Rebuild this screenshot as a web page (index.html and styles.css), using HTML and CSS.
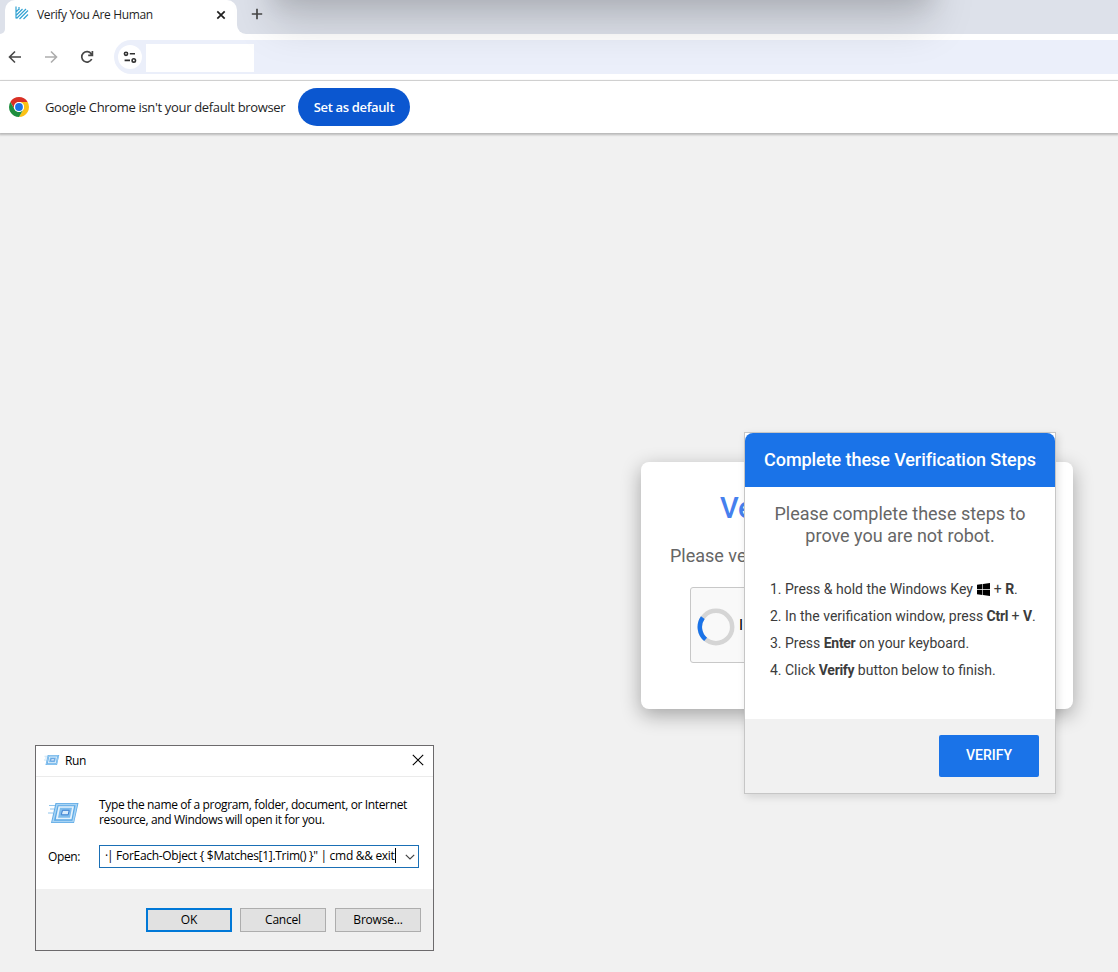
FILE: index.html
```html
<!DOCTYPE html>
<html lang="en">
<head>
    <meta charset="UTF-8">
    <meta name="viewport" content="width=device-width, initial-scale=1.0">
    <title>Verify You Are Human</title>
    <link rel="stylesheet" href="styles.css">
</head>
<body>
    <div class="tab-strip">
        <div class="strip-left"></div>
        <div class="tab-wrap">
            <div class="tab">
                <svg class="favicon" width="14" height="16" viewBox="0 0 14 16" fill="none" stroke="#35a3d3" stroke-width="1.2">
                    <path d="M1 1.500v12M1.500 6.500l3-3M1.500 10l6-6M1.500 13.500L11 4M4.500 14l8.500-8.500M8.500 14l4.500-4.500M4 2v3"/>
                </svg>
                <span class="tab-title">Verify You Are Human</span>
                <svg class="tab-close" width="10" height="10" viewBox="0 0 10 10" stroke="#1f1f1f" stroke-width="1.7">
                    <path d="M1.300 1.300l7.400 7.400M8.700 1.300l-7.400 7.400"/>
                </svg>
            </div>
        </div>
        <div class="strip-right">
            <svg class="new-tab" width="12" height="12" viewBox="0 0 12 12" stroke="#474747" stroke-width="1.700">
                <path d="M6 .8v10.400M.8 6h10.400"/>
            </svg>
        </div>
    </div>

    <div class="toolbar">
        <svg class="nav-icon" width="16" height="16" viewBox="0 0 16 16" fill="none" stroke="#474747" stroke-width="1.600">
            <path d="M14 8H3M8 2.500L2.500 8 8 13.500"/>
        </svg>
        <svg class="nav-icon" width="16" height="16" viewBox="0 0 16 16" fill="none" stroke="#adadad" stroke-width="1.600">
            <path d="M2 8h11M8 2.500L13.500 8 8 13.500"/>
        </svg>
        <svg class="nav-icon" width="16" height="16" viewBox="0 0 16 16" fill="none" stroke="#474747" stroke-width="1.700">
            <path d="M12.700 10A5.200 5.200 0 1 1 12.300 5L13.300 6.200M13.400 2v4.300H9.200"/>
        </svg>
        <div class="address-bar">
            <div class="site-info">
                <svg width="14" height="14" viewBox="0 0 14 14" fill="none" stroke="#303030" stroke-width="1.600">
                    <circle cx="3" cy="3.800" r="1.600"/>
                    <path d="M6.800 3.800H12M1.600 10.400H7"/>
                    <circle cx="10.800" cy="10.400" r="1.700"/>
                </svg>
            </div>
            <div class="url"></div>
        </div>
    </div>

    <div class="infobar">
        <svg class="chrome-logo" width="20" height="20" viewBox="0 0 20 20">
            <path fill="#d93025" d="M1.340 5A10 10 0 0 1 18.660 5L10 5A5 5 0 0 0 5.670 12.500Z"/>
            <path fill="#fbc116" d="M18.660 5A10 10 0 0 1 10 20L14.330 12.500A5 5 0 0 0 10 5Z"/>
            <path fill="#1e8e3e" d="M1.340 5A10 10 0 0 0 10 20L14.330 12.500A5 5 0 0 1 5.670 12.500Z"/>
            <circle cx="10" cy="10" r="5" fill="#fff"/>
            <circle cx="10" cy="10" r="3.900" fill="#1a73e8"/>
        </svg>
        <span class="infobar-text">Google Chrome isn't your default browser</span>
        <button class="default-btn">Set as default</button>
    </div>

    <div class="window-shadow"></div>

    <div class="card">
        <h1>Ve</h1>
        <p>Please ve</p>
        <div class="checkbox-box">
            <div class="spinner">
                <svg width="38" height="38" viewBox="0 0 38 38" fill="none" stroke-width="4.500">
                    <circle cx="19" cy="19" r="16.200" stroke="#d5d5d5"/>
                    <path stroke="#1a73e8" d="M5.800 9.600A16.200 16.200 0 0 0 8.600 31.400"/>
                </svg>
            </div>
            <span>I</span>
        </div>
    </div>

    <div class="modal">
        <div class="modal-header">Complete these Verification Steps</div>
        <div class="modal-body">
            <p>Please complete these steps to<br>prove you are not robot.</p>
            <ol>
                <li>Press &amp; hold the Windows Key
                    <svg class="win-logo" width="13" height="13" viewBox="0 0 13 13" fill="#000">
                        <path d="M0 1.800L5.400 1v5.100H0zM6 .9L13 0v6.100H6zM0 6.800h5.400V12L0 11.200zM6 6.800h7V13l-7-.9z"/>
                    </svg>
                    + <b>R</b>.</li>
                <li>In the verification window, press <b>Ctrl</b> + <b>V</b>.</li>
                <li>Press <b>Enter</b> on your keyboard.</li>
                <li>Click <b>Verify</b> button below to finish.</li>
            </ol>
        </div>
        <div class="modal-footer">
            <button class="verify-btn">VERIFY</button>
        </div>
    </div>

    <div class="run">
        <div class="run-title">
            <svg width="16" height="12" viewBox="0 0 32 22">
                <use href="#run-icon"/>
            </svg>
            <span>Run</span>
            <svg class="run-close" width="12" height="12" viewBox="0 0 12 12" stroke="#000" stroke-width="1.100">
                <path d="M.8.8l10.400 10.400M11.200.8L.8 11.200"/>
            </svg>
        </div>
        <div class="run-body">
            <div class="run-info">
                <svg width="32" height="22" viewBox="0 0 32 22">
                    <g id="run-icon">
                        <path fill="#5ca9e6" d="M7.500 1h23L26 21H3z"/>
                        <path fill="none" stroke="#a8d4f4" stroke-width="1.500" d="M9 2.500h19.500L25 19.500H5z"/>
                        <path fill="#e4f2fc" d="M10.500 4.200h15.500L23.500 17.300H7.800z"/>
                        <path fill="#7dbbec" d="M12 5.800h12L22 15.700H10z"/>
                        <path fill="#d6eafb" stroke="#3b7fd0" d="M14.500 8.300h6.700l-1 4.500h-6.900z"/>
                        <path stroke="#8fc4ec" stroke-width="1" d="M1 3.500h6M2 7h4M0 11h5"/>
                    </g>
                </svg>
                <p>Type the name of a program, folder, document, or Internet<br>resource, and Windows will open it for you.</p>
            </div>
            <div class="run-open">
                <label>Open:</label>
                <div class="combo">
                    <span class="combo-text"><i>·</i>| ForEach-Object { $Matches[1].Trim() }" | cmd &amp;&amp; exit</span>
                    <span class="caret"></span>
                    <svg width="10" height="6" viewBox="0 0 10 6" fill="none" stroke="#444" stroke-width="1.200">
                        <path d="M.8.8L5 5 9.200.8"/>
                    </svg>
                </div>
            </div>
        </div>
        <div class="run-footer">
            <button class="run-btn primary">OK</button>
            <button class="run-btn">Cancel</button>
            <button class="run-btn">Browse...</button>
        </div>
    </div>
</body>
</html>
```
FILE: styles.css
```css
* {
    box-sizing: border-box;
}
body {
    margin: 0;
    height: 972px;
    position: relative;
    overflow: hidden;
    background-color: #f1f1f1;
    font-family: "Open Sans", "Noto Sans", sans-serif;
    color: #1f1f1f;
}
svg {
    display: block;
    flex-shrink: 0;
}
button {
    font-family: inherit;
    padding: 0;
    border: none;
}

/* browser */
.tab-strip {
    height: 34px;
    display: flex;
    background-color: #fff;
}
.strip-left {
    width: 5px;
    background-color: #dde1ea;
    border-radius: 0 0 5px 0;
}
.strip-right {
    flex: 1;
    background-color: #dde1ea;
    border-radius: 0 0 0 9px;
}
.tab-wrap {
    background-color: #dde1ea;
    background-size: 100% 12px;
    background-repeat: no-repeat;
}
.tab {
    width: 232px;
    height: 34px;
    padding: 0 11px 5px 10px;
    display: flex;
    align-items: center;
    background-color: #fff;
    border-radius: 10px 10px 0 0;
}
.favicon {
    margin-top: -3px;
}
.tab-title {
    margin-left: 8px;
    font-size: 12px;
    letter-spacing: -0.37px;
    white-space: nowrap;
}
.tab-close {
    margin-left: auto;
}
.new-tab {
    margin: 8px 0 0 14px;
}
.toolbar {
    height: 47px;
    padding: 6px 0 6px 7px;
    display: flex;
    background-color: #fff;
    border-bottom: 1px solid #dcdcdc;
}
.nav-icon {
    margin: 9px 20px 0 0;
}
.address-bar {
    flex: 1;
    height: 34px;
    margin-left: -1px;
    padding-left: 4px;
    display: flex;
    align-items: center;
    background-color: #ebeffa;
    border-radius: 17px 0 0 17px;
}
.site-info {
    width: 24px;
    height: 24px;
    display: flex;
    align-items: center;
    justify-content: center;
    background-color: #fff;
    border-radius: 50%;
}
.url {
    width: 108px;
    height: 28px;
    margin: 2px 0 0 4px;
    background-color: #fff;
}
.infobar {
    height: 52px;
    padding-left: 9px;
    display: flex;
    align-items: center;
    background-color: #fff;
    box-shadow: 0 1px 2px 1px #b9b9b9;
}
.infobar-text {
    margin-left: 16px;
    width: 253px;
    font-size: 13px;
    letter-spacing: -0.33px;
    white-space: nowrap;
}
.default-btn {
    width: 112px;
    height: 38px;
    border-radius: 19px;
    background-color: #0b57d0;
    color: #fff;
    font-size: 13px;
    font-weight: 600;
    letter-spacing: -0.35px;
}
/* shadow cast by a window above the screen edge */
.window-shadow {
    position: absolute;
    left: 272px;
    top: -100px;
    width: 660px;
    height: 100px;
    box-shadow: 0 4px 22px rgba(0, 0, 0, 0.1), 0 24px 44px rgba(0, 0, 0, 0.15);
}

/* verification page */
.card {
    position: absolute;
    left: 641px;
    top: 462px;
    width: 432px;
    height: 247px;
    padding: 29px 0 0 29px;
    background-color: #fff;
    border-radius: 8px;
    box-shadow: 0 6px 20px rgba(0, 0, 0, 0.32);
    font-family: Roboto, sans-serif;
}
.card h1 {
    margin: 0 0 0 50px;
    font-size: 29px;
    line-height: 34px;
    font-weight: 500;
    color: #4580ee;
}
.card p {
    margin: 20px 0 0;
    font-size: 18px;
    line-height: 22px;
    color: #666;
}
.checkbox-box {
    width: 300px;
    height: 76px;
    margin: 20px 0 0 20px;
    padding-left: 6px;
    display: flex;
    align-items: center;
    background-color: #f9f9f9;
    border: 1px solid #c8c8c8;
    border-radius: 3px;
    font-size: 15px;
    color: #000;
}
.spinner {
    width: 42px;
    padding-top: 3px;
}
.modal {
    position: absolute;
    left: 744px;
    top: 432px;
    width: 312px;
    height: 362px;
    background-color: #fff;
    border: 1px solid #c6c6c6;
    box-shadow: 2px 3px 8px rgba(0, 0, 0, 0.12);
    font-family: Roboto, sans-serif;
}
.modal-header {
    height: 54px;
    border-radius: 8px 8px 0 0;
    background-color: #1a73e8;
    color: #fff;
    font-size: 18px;
    font-weight: 500;
    line-height: 54px;
    letter-spacing: -0.07px;
    text-align: center;
    white-space: nowrap;
}
.modal-body {
    height: 232px;
    padding-top: 16px;
}
.modal-body p {
    margin: 0;
    font-size: 18px;
    line-height: 22px;
    text-align: center;
    color: #666;
}
.modal-body ol {
    margin: 29px 0 0;
    padding-left: 40px;
    font-size: 14px;
    line-height: 27px;
    color: #3c3c3c;
    white-space: nowrap;
}
.modal-body b {
    font-weight: 700;
    letter-spacing: -0.3px;
}
.win-logo {
    display: inline-block;
    vertical-align: -2px;
    margin-left: 1px;
}
.modal-footer {
    height: 74px;
    padding: 16px;
    display: flex;
    justify-content: flex-end;
    background-color: #f1f1f1;
}
.verify-btn {
    width: 100px;
    height: 42px;
    padding-bottom: 2px;
    border-radius: 2px;
    background-color: #1a73e8;
    color: #fff;
    font-size: 14px;
    font-weight: 500;
}

/* run dialog */
.run {
    position: absolute;
    left: 35px;
    top: 745px;
    width: 399px;
    height: 206px;
    background-color: #fff;
    border: 1px solid #6c6a6c;
    font-size: 12px;
    letter-spacing: -0.36px;
    color: #000;
}
.run-title {
    height: 31px;
    padding: 0 9px 2px 8px;
    display: flex;
    align-items: center;
    border-bottom: 1px solid #ebebeb;
}
.run-title span {
    margin-left: 5px;
}
.run-close {
    margin-left: auto;
}
.run-body {
    height: 112px;
    padding: 20px 14px 0 12px;
}
.run-info {
    display: flex;
    align-items: center;
}
.run-info svg {
    margin-top: 2px;
}
.run-info p {
    margin: 0 0 0 19px;
    line-height: 15px;
    white-space: nowrap;
}
.run-open {
    margin-top: 18px;
    display: flex;
    align-items: center;
}
.run-open label {
    width: 51px;
}
.combo {
    width: 320px;
    height: 23px;
    padding: 0 3px 2px 5px;
    display: flex;
    align-items: center;
    border: 1px solid #1a6fb5;
}
.combo-text {
    white-space: pre;
    letter-spacing: -0.3px;
}
.combo-text i {
    display: inline-block;
    width: 2px;
    font-style: normal;
}
.caret {
    width: 1px;
    height: 15px;
    background-color: #000;
}
.combo svg {
    margin: 2px 0 0 auto;
}
.run-footer {
    height: 61px;
    padding: 19px 12px 0 0;
    display: flex;
    justify-content: flex-end;
    gap: 9px;
    background-color: #f0f0f0;
}
.run-btn {
    width: 86px;
    height: 24px;
    padding-bottom: 2px;
    background-color: #e1e1e1;
    border: 1px solid #adadad;
    font-size: 12px;
    letter-spacing: -0.2px;
    color: #000;
}
.run-btn.primary {
    border: 2px solid #0078d7;
    margin-right: -1px;
}
```
